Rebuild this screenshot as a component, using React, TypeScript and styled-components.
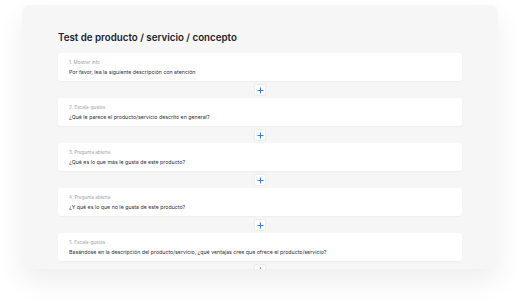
import React from 'react';
import styled, { createGlobalStyle } from 'styled-components';

const GlobalStyle = createGlobalStyle`
  html, body {
    margin: 0;
    padding: 0;
    background: #ffffff;
    font-family: Inter, "Liberation Sans", sans-serif;
  }
`;

const Page = styled.div`
  width: 520px;
  height: 307px;
  padding: 5px 22px 0;
  box-sizing: border-box;
`;

const Panel = styled.div`
  height: 264px;
  background: #f6f6f6;
  border-radius: 8px 8px 0 0;
  box-shadow: 0 12px 28px rgba(0, 0, 0, 0.07);
  padding: 26px 36px 0;
  box-sizing: border-box;
  overflow: hidden;
`;

const Title = styled.h1`
  margin: 0 0 8px;
  font-size: 9.75px;
  line-height: 14px;
  font-weight: 600;
  color: #1c2130;
`;

const Card = styled.div`
  height: 28px;
  box-sizing: border-box;
  background: #ffffff;
  border-radius: 3px;
  box-shadow: 0 1px 2px rgba(0, 0, 0, 0.04);
  padding: 7px 11px 0;
`;

const Label = styled.div`
  font-size: 4.6px;
  line-height: 5px;
  color: #9a9da4;
`;

const Question = styled.div`
  margin-top: 3px;
  font-size: 5.25px;
  line-height: 8px;
  color: #2a2e38;
`;

const AddRow = styled.div`
  display: flex;
  justify-content: center;
  padding: 3px 0 2px;
`;

const AddButton = styled.button`
  width: 12px;
  height: 12px;
  padding: 0;
  border: 1px solid #ececec;
  border-radius: 2px;
  background: #ffffff;
  display: flex;
  align-items: center;
  justify-content: center;
  cursor: pointer;
`;

const questions = [
  { label: '1. Mostrar info', text: 'Por favor, lea la siguiente descripción con atención' },
  { label: '2. Escala-gustos', text: '¿Qué le parece el producto/servicio descrito en general?' },
  { label: '3. Pregunta abierta', text: '¿Qué es lo que más le gusta de este producto?' },
  { label: '4. Pregunta abierta', text: '¿Y qué es lo que no le gusta de este producto?' },
  {
    label: '5. Escala-gustos',
    text: 'Basándose en la descripción del producto/servicio, ¿qué ventajas cree que ofrece el producto/servicio?',
  },
];

function PlusIcon() {
  return (
    <svg width="7" height="7" viewBox="0 0 8 8">
      <path d="M4 0.5v7M0.5 4h7" stroke="#3b7cf5" strokeWidth="1.2" />
    </svg>
  );
}

export default function App() {
  return (
    <>
      <GlobalStyle />
      <Page>
        <Panel>
          <Title>Test de producto / servicio / concepto</Title>
          {questions.map((q) => (
            <React.Fragment key={q.label}>
              <Card>
                <Label>{q.label}</Label>
                <Question>{q.text}</Question>
              </Card>
              <AddRow>
                <AddButton aria-label="Añadir pregunta">
                  <PlusIcon />
                </AddButton>
              </AddRow>
            </React.Fragment>
          ))}
        </Panel>
      </Page>
    </>
  );
}
